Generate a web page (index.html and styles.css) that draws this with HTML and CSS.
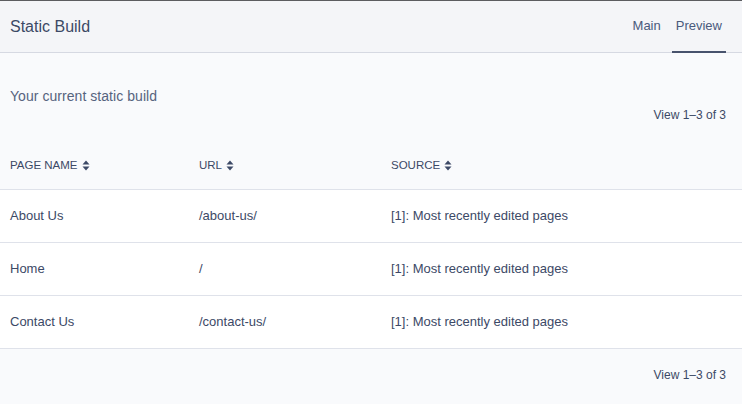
FILE: index.html
```html
<!DOCTYPE html>
<html>
<head>
<meta charset="utf-8">
<link rel="stylesheet" href="styles.css">
</head>
<body>
<div class="app">
  <header class="topbar">
    <h1 class="title">Static Build</h1>
    <nav class="tabs">
      <a class="tab">Main</a>
      <a class="tab active">Preview</a>
    </nav>
  </header>
  <section class="intro">
    <p class="lead">Your current static build</p>
    <p class="count">View 1–3 of 3</p>
  </section>
  <div class="table">
    <div class="row head">
      <div class="cell">PAGE NAME <svg class="sort" viewBox="0 0 8 11" width="8" height="11"><path d="M0.5 4.5 L4 0.5 L7.5 4.5 Z M0.5 6.5 L7.5 6.5 L4 10.5 Z"/></svg></div>
      <div class="cell">URL <svg class="sort" viewBox="0 0 8 11" width="8" height="11"><path d="M0.5 4.5 L4 0.5 L7.5 4.5 Z M0.5 6.5 L7.5 6.5 L4 10.5 Z"/></svg></div>
      <div class="cell">SOURCE <svg class="sort" viewBox="0 0 8 11" width="8" height="11"><path d="M0.5 4.5 L4 0.5 L7.5 4.5 Z M0.5 6.5 L7.5 6.5 L4 10.5 Z"/></svg></div>
    </div>
    <div class="row body">
      <div class="cell">About Us</div>
      <div class="cell">/about-us/</div>
      <div class="cell">[1]: Most recently edited pages</div>
    </div>
    <div class="row body">
      <div class="cell">Home</div>
      <div class="cell">/</div>
      <div class="cell">[1]: Most recently edited pages</div>
    </div>
    <div class="row body">
      <div class="cell">Contact Us</div>
      <div class="cell">/contact-us/</div>
      <div class="cell">[1]: Most recently edited pages</div>
    </div>
  </div>
  <footer class="foot">
    <p class="count">View 1–3 of 3</p>
  </footer>
</div>
</body>
</html>
```

FILE: styles.css
```css
html, body {
  margin: 0;
  padding: 0;
  background: #f9fafc;
}
body {
  font-family: "Liberation Sans", Arial, sans-serif;
  color: #3c4966;
}
.app {
  width: 742px;
  height: 404px;
  overflow: hidden;
  background: #f9fafc;
}
.topbar {
  height: 51px;
  border-top: 1px solid #5c5d60;
  border-bottom: 1px solid #d6d9e2;
  background: #f4f5f8;
  display: flex;
  align-items: stretch;
  justify-content: space-between;
  padding: 0 16px 0 10px;
}
.title {
  margin: 0;
  font-size: 16px;
  font-weight: 400;
  line-height: 52px;
  color: #3c4966;
}
.tabs {
  display: flex;
  margin-bottom: -1px;
}
.tab {
  font-size: 13px;
  line-height: 50px;
  padding: 0 4px;
  color: #4a5a7c;
  border-bottom: 2px solid transparent;
}
.tab + .tab {
  margin-left: 7px;
}
.tab.active {
  border-bottom-color: #48536d;
}
.intro {
  padding: 33px 16px 0 10px;
}
.lead {
  margin: 0;
  font-size: 14px;
  line-height: 20px;
  color: #56637e;
  letter-spacing: 0.05px;
}
.count {
  margin: 1px 0 0;
  font-size: 12px;
  line-height: 16px;
  text-align: right;
  color: #3c4966;
}
.table {
  margin-top: 18px;
}
.row {
  display: grid;
  grid-template-columns: 189px 192px 1fr;
  border-bottom: 1px solid #dfe2ea;
  align-items: center;
}
.row.head {
  height: 48px;
}
.row.body {
  height: 52px;
  background: #ffffff;
}
.cell {
  padding-left: 10px;
  font-size: 13px;
}
.body .cell {
  padding-bottom: 2px;
}
.head .cell {
  font-size: 11.5px;
  display: flex;
  align-items: center;
  gap: 4px;
}
.sort {
  fill: #3c4966;
}
.foot {
  padding: 18px 16px 0 10px;
}
.foot .count {
  margin: 0;
}
```
